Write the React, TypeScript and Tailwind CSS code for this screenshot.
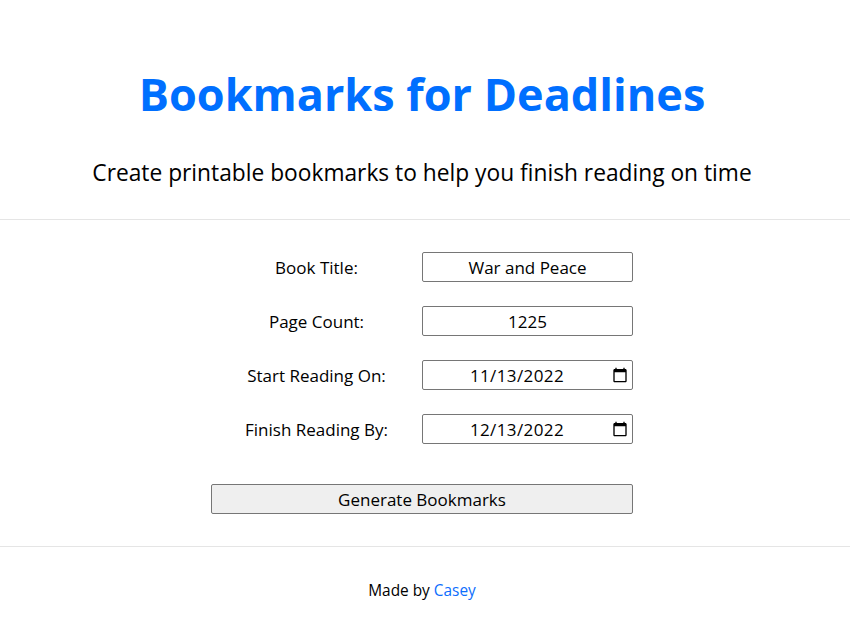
function CalendarIcon() {
  return (
    <svg width="16" height="16" viewBox="0 0 24 24" fill="currentColor" className="shrink-0">
      <path d="M20 3h-1V1h-2v2H7V1H5v2H4c-1.1 0-2 .9-2 2v16c0 1.1.9 2 2 2h16c1.1 0 2-.9 2-2V5c0-1.1-.9-2-2-2zm0 18H4V8h16v13z" />
    </svg>
  );
}

function Field({ label, value, date }: { label: string; value: string; date?: boolean }) {
  return (
    <div className="flex items-center h-[30px]">
      <label className="w-[211px] text-center pt-[2px]">{label}</label>
      <div className={`relative w-[211px] h-[30px] flex items-center justify-center border border-[#767676] rounded-[2px] bg-white pt-[2px] ${date ? 'pr-[21px] tracking-[0.4px]' : ''}`}>
        <span>{value}</span>
        {date && (
          <span className="absolute right-[4px] top-[6px] text-black">
            <CalendarIcon />
          </span>
        )}
      </div>
    </div>
  );
}

const fields = [
  { label: 'Book Title:', value: 'War and Peace' },
  { label: 'Page Count:', value: '1225' },
  { label: 'Start Reading On:', value: '11/13/2022', date: true },
  { label: 'Finish Reading By:', value: '12/13/2022', date: true },
];

export default function App() {
  return (
    <div className="font-['Open_Sans','Noto_Sans',sans-serif] text-black bg-white min-h-[642px] text-[17px]">
      <header className="flex flex-col items-center pt-[64px] pb-[30px] pr-[6px] border-b border-[#e5e5e5]">
        <h1 className="text-[45px] leading-[60px] font-bold text-[#006fff]">Bookmarks for Deadlines</h1>
        <p className="mt-[33px] text-[22.75px] leading-[32px]">Create printable bookmarks to help you finish reading on time</p>
      </header>
      <main className="flex flex-col items-center pt-[32px] pb-[32px] pr-[6px] border-b border-[#e5e5e5]">
        <div className="flex flex-col gap-[24px] w-[422px]">
          {fields.map((f) => (
            <Field key={f.label} label={f.label} value={f.value} date={f.date} />
          ))}
        </div>
        <button className="mt-[40px] w-[422px] h-[30px] pt-[2px] bg-[#efefef] border border-[#767676] rounded-[2px] text-center">Generate Bookmarks</button>
      </main>
      <footer className="text-center pt-[32px] pr-[6px] text-[15.4px]">
        Made by <a className="text-[#0d6efd]">Casey</a>
      </footer>
    </div>
  );
}
